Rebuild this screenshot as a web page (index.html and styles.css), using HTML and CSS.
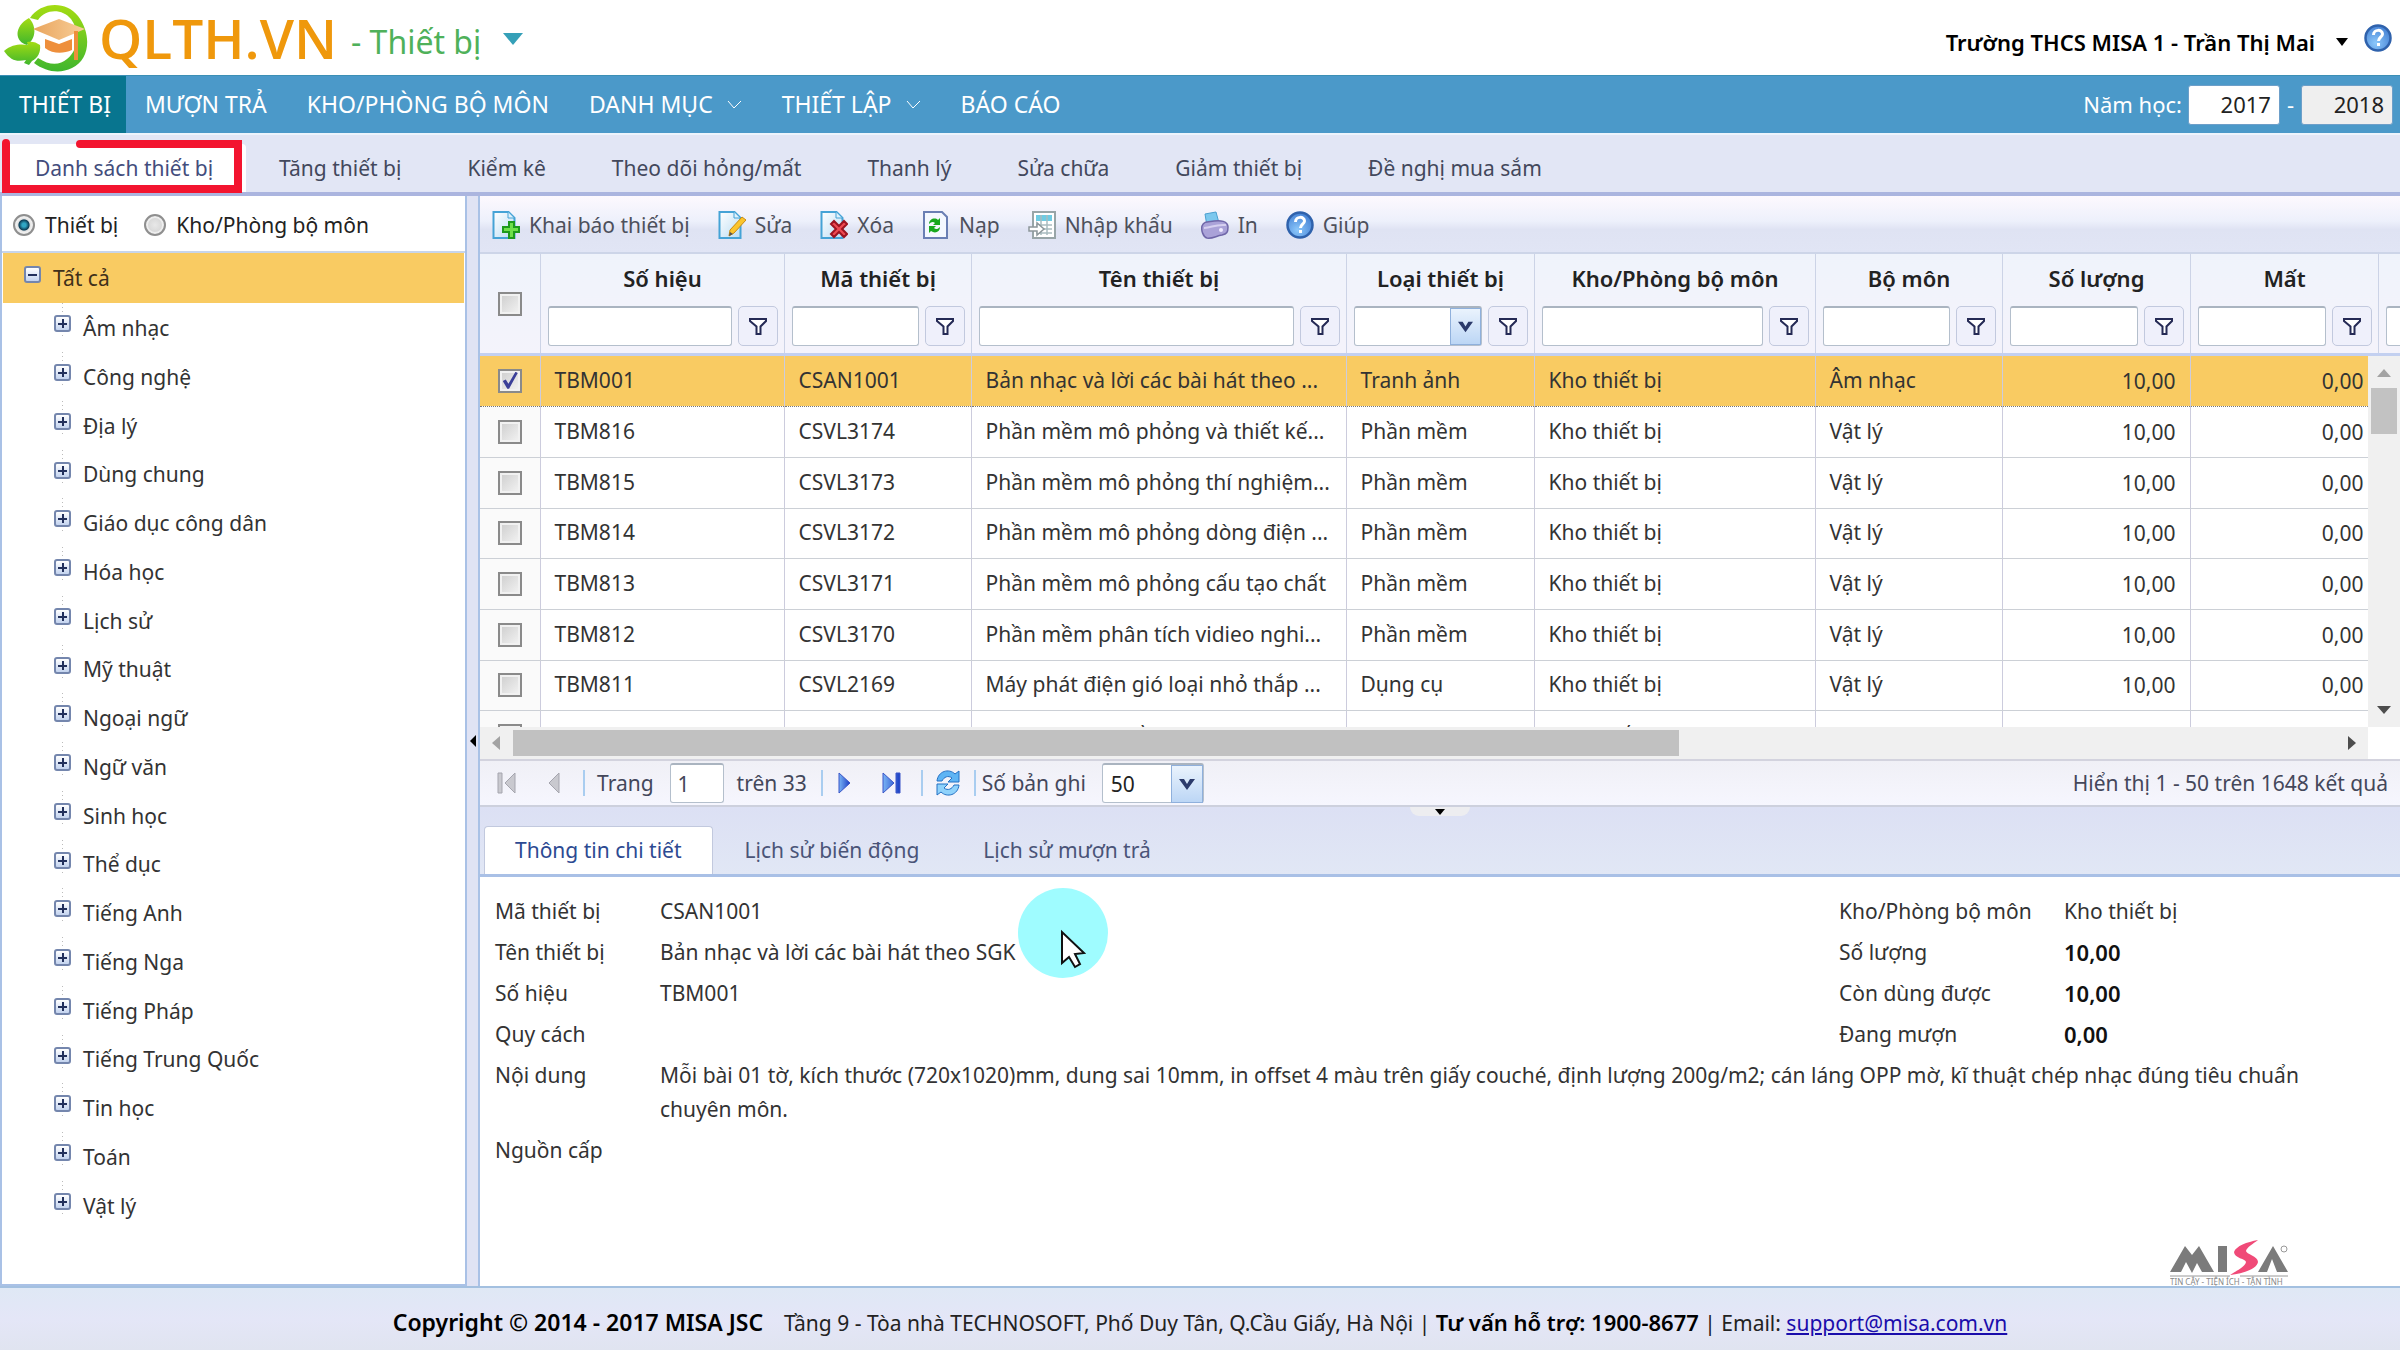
FILE: index.html
```
<!DOCTYPE html>
<html lang="vi">
<head>
<meta charset="utf-8">
<title>QLTH.VN - Thiết bị</title>
<link rel="stylesheet" href="styles.css">
</head>

<body>
<svg class="defs">
    <linearGradient id="gPage" x1="0" y1="0" x2="1" y2="1"><stop offset="0" stop-color="#fff"/><stop offset="1" stop-color="#b9dcf3"/></linearGradient>
    <linearGradient id="gLeaf" x1="0" y1="0" x2="0" y2="1"><stop offset="0" stop-color="#a4dc12"/><stop offset="1" stop-color="#3fb62d"/></linearGradient>
    <linearGradient id="gCap" x1="0" y1="0" x2="1" y2="0"><stop offset="0" stop-color="#e9a45c"/><stop offset="1" stop-color="#f8cf9a"/></linearGradient>
    <linearGradient id="gBlue" x1="0" y1="0" x2="1" y2="0"><stop offset="0" stop-color="#79b4f5"/><stop offset="1" stop-color="#1b3fc4"/></linearGradient>
    <radialGradient id="gHelp" cx="0.4" cy="0.7" r="0.8"><stop offset="0" stop-color="#8cc8fb"/><stop offset="1" stop-color="#3c78cf"/></radialGradient>
    <symbol id="filter" viewBox="0 0 20 20"><path d="M2 3h16v2l-5.500 5.500v7.500h-4v-7.500L2 5z" fill="#fff" stroke="#252a55" stroke-width="2"/></symbol>
    <symbol id="page" viewBox="0 0 28 28"><path d="M1.500 1h15l6 6v20h-21z" fill="url(#gPage)" stroke="#45a3d6" stroke-width="2"/><path d="M16 1v6h6" fill="#dff1fc" stroke="#45a3d6"/></symbol>
    <symbol id="help" viewBox="0 0 28 28"><circle cx="14" cy="14" r="12.500" fill="url(#gHelp)" stroke="#2f62ac" stroke-width="2.500"/><path d="M9.500 11c0-6 9-6 9-1 0 3-4 3.500-4 7M14.500 19v3" fill="none" stroke="#fff" stroke-width="3"/></symbol>
    <symbol id="down" viewBox="0 0 16 16"><path d="M0 3h5l3 5 3-5h5L8 14z" fill="#2b3a6b"/></symbol>
</svg>

<div class="head">
    <svg class="logo" viewBox="0 0 90 75">
        <path d="M30 18C40 2 66 0 78 16c14 18 12 44-6 52-12 6-26 4-38-5l4-5c12 8 22 7 29 1 12-10 13-28 4-40-9-11-26-10-33 1z" fill="url(#gLeaf)"/>
        <path d="M29 18c7 7 8 20-2 27-12-3-14-18 2-27z" fill="url(#gLeaf)"/>
        <path d="M4 51c8-7 17-7 24-6l-1-3c5-1 9 0 13 3 1 7-2 13-8 16l-3 4-5-2 2-3C17 62 11 61 4 51z" fill="url(#gLeaf)"/>
        <path d="M45 39l14 5 13-5v11c-9 4-19 4-27-2z" fill="#ee8f3c"/>
        <path d="M33 29l26-10 26 10-26 11z" fill="url(#gCap)"/>
        <path d="M74 31h4v29h-4z" fill="#ee8f3c"/>
    </svg>
    <h1 class="brand">QLTH.VN</h1>
    <button class="module">- Thiết bị <svg viewBox="0 0 20 12"><path d="M0 0h20L10 12z" fill="#35a0b8"/></svg></button>
    <button class="user">Trường THCS MISA 1 - Trần Thị Mai <svg viewBox="0 0 12 8"><path d="M0 0h12L6 8z"/></svg></button>
    <a class="help" href="#"><svg><use href="#help"/></svg></a>
</div>

<div class="nav">
    <a href="#" class="on">THIẾT BỊ</a>
    <a href="#">MƯỢN TRẢ</a>
    <a href="#">KHO/PHÒNG BỘ MÔN</a>
    <a href="#">DANH MỤC <svg viewBox="0 0 15 9"><path d="M1 1l6 7 7-7"/></svg></a>
    <a href="#">THIẾT LẬP <svg viewBox="0 0 15 9"><path d="M1 1l6 7 7-7"/></svg></a>
    <a href="#">BÁO CÁO</a>
    <div class="year">
        <label for="y1">Năm học:</label><input id="y1" type="text" value="2017"><span>-</span><input id="y2" type="text" value="2018" aria-label="Đến năm" readonly>
    </div>
</div>

<div class="subnav">
    <a href="#" class="on">Danh sách thiết bị</a>
    <a href="#">Tăng thiết bị</a>
    <a href="#">Kiểm kê</a>
    <a href="#">Theo dõi hỏng/mất</a>
    <a href="#">Thanh lý</a>
    <a href="#">Sửa chữa</a>
    <a href="#">Giảm thiết bị</a>
    <a href="#">Đề nghị mua sắm</a>
    <svg class="mark" viewBox="0 0 244 60"><path d="M6 8v46h232V9H80" fill="none" stroke="#f3142f" stroke-width="8" stroke-linecap="round"/></svg>
</div>

<div class="main">
    <div class="side">
        <div class="mode">
            <input type="radio" name="mode" id="m1" checked><label for="m1">Thiết bị</label>
            <input type="radio" name="mode" id="m2"><label for="m2">Kho/Phòng bộ môn</label>
        </div>
        <div class="root"><i class="tog"></i>Tất cả</div>
        <ul class="tree">
            <li><i class="tog plus"></i>Âm nhạc</li>
            <li><i class="tog plus"></i>Công nghệ</li>
            <li><i class="tog plus"></i>Địa lý</li>
            <li><i class="tog plus"></i>Dùng chung</li>
            <li><i class="tog plus"></i>Giáo dục công dân</li>
            <li><i class="tog plus"></i>Hóa học</li>
            <li><i class="tog plus"></i>Lịch sử</li>
            <li><i class="tog plus"></i>Mỹ thuật</li>
            <li><i class="tog plus"></i>Ngoại ngữ</li>
            <li><i class="tog plus"></i>Ngữ văn</li>
            <li><i class="tog plus"></i>Sinh học</li>
            <li><i class="tog plus"></i>Thể dục</li>
            <li><i class="tog plus"></i>Tiếng Anh</li>
            <li><i class="tog plus"></i>Tiếng Nga</li>
            <li><i class="tog plus"></i>Tiếng Pháp</li>
            <li><i class="tog plus"></i>Tiếng Trung Quốc</li>
            <li><i class="tog plus"></i>Tin học</li>
            <li><i class="tog plus"></i>Toán</li>
            <li><i class="tog plus"></i>Vật lý</li>
        </ul>
    </div>

    <div class="split"><svg viewBox="0 0 6 12"><path d="M6 0v12L0 6z"/></svg></div>

    <div class="content">
        <div class="tools">
            <button><svg viewBox="0 0 28 28"><use href="#page" width="28" height="28"/><path d="M17 11h5v5h5v5h-5v6h-5v-6h-6v-5h6z" fill="#6fe04a" stroke="#1e9a1c" stroke-width="2"/></svg>Khai báo thiết bị</button>
            <button><svg viewBox="0 0 28 28"><use href="#page" width="28" height="28"/><path d="M24 6l4 3-12 13-5 3 1-6z" fill="#fbc52d" stroke="#c98a12"/><path d="M11 25l1-4 3 2z" fill="#555"/></svg>Sửa</button>
            <button><svg viewBox="0 0 28 28"><use href="#page" width="28" height="28"/><path d="M11 13l3-3 5 5 5-5 3 3-5 5 5 5-3 3-5-5-5 5-3-3 5-5z" fill="#ee4a52" stroke="#9c1420" stroke-width="2"/></svg>Xóa</button>
            <button><svg viewBox="0 0 28 28"><path d="M2 1h18l5 5v21H2z" fill="#f4f8ff" stroke="#6a7fb4" stroke-width="2"/><path d="M7 13c0-5 6-7 9-4l2-2v7h-7l2-2c-2-2-4-1-6 1zM18 16c0 5-5 7-9 4l-2 2v-7h7l-2 2c2 2 4 1 6-1z" fill="#18a81e"/></svg>Nạp</button>
            <button><svg viewBox="0 0 28 28"><path d="M5 1h22v26H5z" fill="#fff" stroke="#98a5a8" stroke-width="2"/><path d="M8 4h16v6H8z" fill="#6fcbe2"/><path d="M8 14h16M8 18h16M8 22h16M13 4v20M19 4v20" stroke="#a9bcc0" stroke-width="1.500"/><path d="M1 16h8v-4l7 6-7 6v-4H1z" fill="#fff" stroke="#8d979b" stroke-width="1.500"/></svg>Nhập khẩu</button>
            <button><svg viewBox="0 0 28 28"><path d="M4 3l11-2 3 11-12 3z" fill="#7cc8ee" stroke="#4ba0d0"/><path d="M1 15c2-5 6-4 12-5s14 0 14 6c0 5-1 7-6 8-6 1-10 4-15 3-4-1-6-8-5-12z" fill="#aaa2d8" stroke="#6f66a8" stroke-width="1.500"/><path d="M3 17c8 0 10-4 22-3" stroke="#d6d0f0" stroke-width="2" fill="none"/><circle cx="20" cy="19" r="2" fill="#efeaff"/></svg>In</button>
            <button><svg><use href="#help"/></svg>Giúp</button>
        </div>

        <div class="grid">
            <div class="clip">
            <table class="thead">
                <colgroup><col class="c0"><col class="c1"><col class="c2"><col class="c3"><col class="c4"><col class="c5"><col class="c6"><col class="c7"><col class="c8"><col class="c9"></colgroup>
                <tr>
                    <th><input type="checkbox" aria-label="Chọn tất cả"></th>
                    <th><label for="f1">Số hiệu</label><div class="f"><input id="f1" type="text"><button aria-label="Lọc"><svg><use href="#filter"/></svg></button></div></th>
                    <th><label for="f2">Mã thiết bị</label><div class="f"><input id="f2" type="text"><button aria-label="Lọc"><svg><use href="#filter"/></svg></button></div></th>
                    <th><label for="f3">Tên thiết bị</label><div class="f"><input id="f3" type="text"><button aria-label="Lọc"><svg><use href="#filter"/></svg></button></div></th>
                    <th><label for="f4">Loại thiết bị</label><div class="f"><div class="combo"><select id="f4"><option></option></select><svg><use href="#down"/></svg></div><button aria-label="Lọc"><svg><use href="#filter"/></svg></button></div></th>
                    <th><label for="f5">Kho/Phòng bộ môn</label><div class="f"><input id="f5" type="text"><button aria-label="Lọc"><svg><use href="#filter"/></svg></button></div></th>
                    <th><label for="f6">Bộ môn</label><div class="f"><input id="f6" type="text"><button aria-label="Lọc"><svg><use href="#filter"/></svg></button></div></th>
                    <th><label for="f7">Số lượng</label><div class="f"><input id="f7" type="text"><button aria-label="Lọc"><svg><use href="#filter"/></svg></button></div></th>
                    <th><label for="f8">Mất</label><div class="f"><input id="f8" type="text"><button aria-label="Lọc"><svg><use href="#filter"/></svg></button></div></th>
                    <th><label></label><div class="f"><input type="text" aria-label="Hỏng"></div></th>
                </tr>
            </table>
            </div>
            <div class="body">
                <div class="rows">
                <table>
                    <colgroup><col class="c0"><col class="c1"><col class="c2"><col class="c3"><col class="c4"><col class="c5"><col class="c6"><col class="c7"><col class="c8"></colgroup>
                    <tr class="sel"><td><input type="checkbox" aria-label="TBM001" checked></td><td>TBM001</td><td>CSAN1001</td><td>Bản nhạc và lời các bài hát theo ...</td><td>Tranh ảnh</td><td>Kho thiết bị</td><td>Âm nhạc</td><td class="num">10,00</td><td class="num">0,00</td></tr>
                    <tr><td><input type="checkbox" aria-label="TBM816"></td><td>TBM816</td><td>CSVL3174</td><td>Phần mềm mô phỏng và thiết kế...</td><td>Phần mềm</td><td>Kho thiết bị</td><td>Vật lý</td><td class="num">10,00</td><td class="num">0,00</td></tr>
                    <tr><td><input type="checkbox" aria-label="TBM815"></td><td>TBM815</td><td>CSVL3173</td><td>Phần mềm mô phỏng thí nghiệm...</td><td>Phần mềm</td><td>Kho thiết bị</td><td>Vật lý</td><td class="num">10,00</td><td class="num">0,00</td></tr>
                    <tr><td><input type="checkbox" aria-label="TBM814"></td><td>TBM814</td><td>CSVL3172</td><td>Phần mềm mô phỏng dòng điện ...</td><td>Phần mềm</td><td>Kho thiết bị</td><td>Vật lý</td><td class="num">10,00</td><td class="num">0,00</td></tr>
                    <tr><td><input type="checkbox" aria-label="TBM813"></td><td>TBM813</td><td>CSVL3171</td><td>Phần mềm mô phỏng cấu tạo chất</td><td>Phần mềm</td><td>Kho thiết bị</td><td>Vật lý</td><td class="num">10,00</td><td class="num">0,00</td></tr>
                    <tr><td><input type="checkbox" aria-label="TBM812"></td><td>TBM812</td><td>CSVL3170</td><td>Phần mềm phân tích vidieo nghi...</td><td>Phần mềm</td><td>Kho thiết bị</td><td>Vật lý</td><td class="num">10,00</td><td class="num">0,00</td></tr>
                    <tr><td><input type="checkbox" aria-label="TBM811"></td><td>TBM811</td><td>CSVL2169</td><td>Máy phát điện gió loại nhỏ thắp ...</td><td>Dụng cụ</td><td>Kho thiết bị</td><td>Vật lý</td><td class="num">10,00</td><td class="num">0,00</td></tr>
                    <tr><td><input type="checkbox" aria-label="TBM810"></td><td>TBM810</td><td>CSVL2168</td><td>Bộ thí nghiệm về dòng điện ...</td><td>Dụng cụ</td><td>Kho thiết bị</td><td>Vật lý</td><td class="num">10,00</td><td class="num">0,00</td></tr>
                </table>
                </div>
                <div class="vbar">
                    <svg viewBox="0 0 14 8"><path d="M0 8L7 0l7 8z" fill="#a3a3a3"/></svg>
                    <div class="thumb"></div>
                    <svg viewBox="0 0 14 8"><path d="M0 0h14L7 8z" fill="#4d4d4d"/></svg>
                </div>
            </div>
            <div class="hbar">
                <svg viewBox="0 0 8 14"><path d="M8 0v14L0 7z" fill="#a3a3a3"/></svg>
                <div class="track"><div class="thumb"></div></div>
                <svg viewBox="0 0 8 14"><path d="M0 0v14l8-7z" fill="#4d4d4d"/></svg>
            </div>
        </div>

        <div class="pager">
            <button aria-label="Trang đầu" disabled><svg viewBox="0 0 20 22"><path d="M1 1h4v20H1zM18 1v20L8 11z" fill="#c9c9cf" stroke="#a5a5ae"/></svg></button>
            <button aria-label="Trang trước" disabled><svg viewBox="0 0 20 22"><path d="M15 1v20L5 11z" fill="#c9c9cf" stroke="#a5a5ae"/></svg></button>
            <i class="sep"></i>
            <label for="pg">Trang</label>
            <input id="pg" class="pg" type="text" value="1">
            <span class="of">trên 33</span>
            <i class="sep"></i>
            <button aria-label="Trang sau"><svg viewBox="0 0 20 22"><path d="M4 1v20l11-10z" fill="url(#gBlue)" stroke="#3a55c8"/></svg></button>
            <button aria-label="Trang cuối"><svg viewBox="0 0 20 22"><path d="M1 1v20l11-10zM14 1h4v20h-4z" fill="url(#gBlue)" stroke="#3a55c8"/></svg></button>
            <i class="sep"></i>
            <button aria-label="Tải lại"><svg class="reload" viewBox="0 0 26 26"><path d="M2 11C3 1 14-2 20 4l4-3v11H13l4-4c-4-3-8-1-10 3z" fill="#5eb4f4" stroke="#2370c4"/><path d="M24 15c-1 10-12 13-18 7l-4 3V14h11l-4 4c4 3 8 1 10-3z" fill="#8fd2fb" stroke="#2370c4"/></svg></button>
            <i class="sep last"></i>
            <label for="sz">Số bản ghi</label>
            <div class="combo size"><select id="sz"><option>50</option></select><svg><use href="#down"/></svg></div>
            <span class="total">Hiển thị 1 - 50 trên 1648 kết quả</span>
        </div>

        <div class="tabs">
            <a href="#" class="on">Thông tin chi tiết</a>
            <a href="#">Lịch sử biến động</a>
            <a href="#">Lịch sử mượn trả</a>
            <span class="grip"><svg viewBox="0 0 10 6"><path d="M0 0h10L5 6z"/></svg></span>
        </div>

        <div class="detail">
            <dl>
                <dt>Mã thiết bị</dt><dd>CSAN1001</dd><dt>Kho/Phòng bộ môn</dt><dd>Kho thiết bị</dd>
                <dt>Tên thiết bị</dt><dd>Bản nhạc và lời các bài hát theo SGK</dd><dt>Số lượng</dt><dd class="qty">10,00</dd>
                <dt>Số hiệu</dt><dd>TBM001</dd><dt>Còn dùng được</dt><dd class="qty">10,00</dd>
                <dt>Quy cách</dt><dd></dd><dt>Đang mượn</dt><dd class="qty">0,00</dd>
                <dt>Nội dung</dt><dd class="wide">Mỗi bài 01 tờ, kích thước (720x1020)mm, dung sai 10mm, in offset 4 màu trên giấy couché, định lượng 200g/m2; cán láng OPP mờ, kĩ thuật chép nhạc đúng tiêu chuẩn chuyên môn.</dd>
                <dt>Nguồn cấp</dt><dd class="wide"></dd>
            </dl>
            <svg class="misa" viewBox="0 0 118 46">
                <path d="M0 32L15 6l7 9 7-9 15 26H32l-5-9-5 10-6-11-5 10z" fill="#7b7b7b"/>
                <path d="M48 6h9v26h-9z" fill="#7b7b7b"/>
                <path d="M88 0C77 2 66 6 64 12c0 6 12 7 12 10-1 5-10 9-16 13 12-1 27-6 28-13 0-6-12-8-12-11 1-4 7-7 12-11z" fill="#f04a78"/>
                <path d="M88 32L103 6l15 26h-11l-5-13-5 13z" fill="#7b7b7b"/>
                <circle cx="114" cy="9" r="3" fill="none" stroke="#999"/>
                <path d="M0 36h60M70 36h48" stroke="#9a9a9a"/>
                <text x="0" y="45">TIN CẬY - TIỆN ÍCH - TẬN TÌNH</text>
            </svg>
            <svg class="pointer" viewBox="0 0 90 90">
                <circle cx="45" cy="45" r="45" fill="#9ffcff"/>
                <path d="M44 44v31l7-6 6 10 5-3-5-10 9-1z" fill="#fff" stroke="#111" stroke-width="2"/>
            </svg>
        </div>
    </div>
</div>

<div class="foot">
    <b>Copyright © 2014 - 2017 MISA JSC</b><span>Tầng 9 - Tòa nhà TECHNOSOFT, Phố Duy Tân, Q.Cầu Giấy, Hà Nội | <b>Tư vấn hỗ trợ: 1900-8677</b> | Email: <a href="mailto:support@misa.com.vn">support@misa.com.vn</a></span>
</div>
</body>
</html>
```
FILE: styles.css
```
*{margin:0;padding:0;box-sizing:border-box;}
body{display:flex;flex-direction:column;min-height:100vh;overflow:hidden;background:#fff;color:#333;font:21px/30px "Noto Sans","Open Sans",sans-serif;}
input,button,select{font:inherit;color:inherit;border:0;background:none;outline:0;}
a{color:inherit;text-decoration:none;}
ul{list-style:none;}
svg{display:block;flex:none;}
b,th{font-weight:600;}
.defs{position:absolute;width:0;height:0;}

/* header */
.head{display:flex;align-items:center;height:75px;}
.logo{width:90px;height:75px;}
.brand{margin-left:9px;font-family:"Open Sans",sans-serif;font-size:55px;line-height:75px;font-weight:600;color:#ef980c;}
.module{display:flex;align-items:center;margin-left:14px;padding-top:8px;font-size:32px;line-height:40px;color:#4fb15a;}
.module svg{width:20px;height:12px;margin:0 0 6px 22px;}
.user{display:flex;align-items:center;margin-left:auto;padding-top:8px;font-size:22px;font-weight:600;color:#000;}
.user svg{width:12px;height:8px;margin-left:21px;}
.help svg{width:28px;height:28px;margin:0 8px 0 16px;}

.nav{display:flex;height:58px;background:#4b99c9;border-top:1px solid #3c8fb5;color:#fff;font-size:23px;line-height:55px;}
.nav a{display:flex;align-items:center;padding:0 21px 0 19px;}
.nav .on{padding-right:15px;background:#08758f;}
.nav a svg{width:15px;height:9px;margin-left:14px;fill:none;stroke:#fff;}
.year{display:flex;align-items:center;margin-left:auto;padding-right:7px;font-size:22px;}
.year input{width:92px;height:40px;padding-right:8px;background:#fff;border:1px solid #6d9fc9;border-radius:3px;color:#222;text-align:right;}
.year label{margin-right:6px;}
.year span{margin:0 7px;}
.year input[readonly]{background:#efefef;}

.subnav{position:relative;display:flex;align-items:flex-end;height:63px;padding:0 3px;background:#e2e6f5;border-top:2px solid #edf4fc;border-bottom:4px solid #abb5df;color:#43485c;}
.subnav a{padding:0 33px;line-height:48px;}
.subnav .on{padding-left:32px;background:#fff;border-radius:4px 4px 0 0;color:#434d7c;}
.mark{position:absolute;left:0;top:0;width:244px;height:60px;}

.main{display:flex;flex:1;background:#e0e3f4;}

/* tree */
.side{width:467px;background:#fff;border:2px solid #a9c1e6;border-top:0;}
.mode{display:flex;align-items:center;height:57px;padding:3px 0 0 11px;border-bottom:2px solid #c8d5ea;color:#222;}
.mode input{appearance:none;width:22px;height:22px;margin-right:10px;border:2px solid #8f8f8f;border-radius:50%;background:radial-gradient(#e8e8e8,#ccc);box-shadow:inset 0 0 0 2px #eee;}
.mode input:checked{background:radial-gradient(#2fa6c4 15%,#0b3c55 40%,#e4e4e4 48%);}
.mode label{margin-right:26px;}
.root{display:flex;align-items:center;height:50px;margin:0 1px;padding-left:21px;background:#f9cb62;color:#40301a;}
.tree{display:grid;grid-auto-rows:49px 49px 49px 48px;padding-left:52px;}
.tree li{display:flex;align-items:center;background:repeating-linear-gradient(#bbb 0 1px,#fff 1px 4px) 8px 0/1px 36px no-repeat;}
.tog{position:relative;width:17px;height:17px;margin:0 12px 8px 0;border:2px solid #7486ad;border-radius:3px;background:linear-gradient(#fff,#c3d3ef);}
.tog:before,.plus:after{content:'';position:absolute;background:#22305c;}
.tog:before{left:2px;top:6px;width:9px;height:2px;}
.plus:after{left:6px;top:2px;width:2px;height:9px;}

.split{display:flex;align-items:center;justify-content:center;width:11px;}
.split svg{width:6px;height:12px;}
.content{flex:1;min-width:0;display:flex;flex-direction:column;border-left:2px solid #a9c1e6;}

/* toolbar */
.tools{display:flex;align-items:center;height:58px;padding:2px 0 0 12px;background:linear-gradient(#fdf9fe,#edf0fb 45%,#dfe3f3 60%,#e1e5f5);border-bottom:2px solid #cdd5e8;color:#4d505c;}
.tools button{display:flex;align-items:center;margin-right:28px;}
.tools svg{width:28px;height:28px;margin-right:9px;}

/* grid */
.grid{background:#fff;}
.clip,.rows{overflow:hidden;}
table{table-layout:fixed;width:0;border-collapse:collapse;}
.c0{width:60px;}
.c1{width:244px;}
.c2{width:187px;}
.c3{width:375px;}
.c4{width:188px;}
.c5{width:281px;}
.c6,.c9{width:187px;}
.c7,.c8{width:188px;}
.clip{background:#f0f3fc;border-bottom:3px solid #c3d0f0;}
th{height:99px;padding:7px 6px 0 7px;border-right:1px solid #ccd3e6;background:linear-gradient(#eff3fb,#f4f3fb);color:#222;font-size:22px;vertical-align:top;}
th label{display:block;height:34px;line-height:34px;}
th:first-child{padding:0;vertical-align:middle;}
.f{display:flex;gap:6px;height:40px;margin-top:11px;}
.f>input,.f>.combo{flex:1;min-width:0;}
.f>input,.combo,.pg{background:#fff;border:1px solid #b4bfcc;border-top:2px solid #aab4c0;border-radius:3px;}
.f button{display:flex;align-items:center;justify-content:center;width:40px;border:1px solid #c2c9de;border-radius:5px;background:#eff0fb;}
.f button svg{width:20px;height:20px;}
.combo{position:relative;}
.combo select{appearance:none;width:100%;height:100%;padding-left:8px;}
.combo svg{position:absolute;right:0;top:0;width:31px;height:100%;padding:8px 7px;background:linear-gradient(#eaf3fd,#bcd6f5);border:1px solid #8fb0dc;pointer-events:none;}
input[type=checkbox]{appearance:none;display:block;position:relative;width:24px;height:24px;margin:0 auto;border:2px solid #8a8a8a;background:linear-gradient(135deg,#cdcdcd,#f4f4f4);box-shadow:inset 0 0 0 2px #f1f1f1;}
input[type=checkbox]:checked:before{content:'';position:absolute;left:3px;top:1px;width:15px;height:17px;background:#3b3f98;clip-path:polygon(0 55%,20% 45%,38% 70%,85% 0,100% 8%,42% 100%,30% 100%);}
.body{display:flex;height:371px;}
.rows{flex:1;}
td{height:51px;padding:0 0 2px 14px;border-right:1px solid #ccd;border-bottom:1px solid #ccd0d6;white-space:nowrap;}
td:first-child{padding:0;background:#fafafa;}
tr:nth-child(3n+1) td{height:50px;}
.sel td,.sel td:first-child{background:#f9cb62;border-bottom:1px dotted #777;}
.num{padding:0 14px 0 0;text-align:right;}
.vbar,.hbar{display:flex;align-items:center;background:#f0f0f0;}
.vbar{flex-direction:column;width:32px;padding:13px 0;}
.vbar svg{width:14px;height:8px;}
.vbar .thumb{width:26px;height:46px;margin:11px 0 auto;background:#c2c2c2;}
.hbar{height:32px;margin-right:32px;padding:0 12px;}
.hbar svg{width:8px;height:14px;}
.track{flex:1;margin:0 13px;}
.track .thumb{width:64%;height:26px;background:#c1c1c1;}

.pager{display:flex;align-items:center;height:48px;padding:0 12px 0 17px;background:linear-gradient(#f0f0f6,#f6f6fe);border-top:2px solid #d3d3de;border-bottom:2px solid #cdd0dd;color:#44475a;}
.pager svg{width:20px;height:22px;}
.pager button{margin-right:27px;}
.pager button+.sep{margin-left:-8px;}
.pager .reload{width:26px;height:26px;margin-right:-6px;}
.sep{width:2px;height:26px;margin-right:12px;background:#a9cdf0;}
.pager .last{margin-right:6px;}
.pg{width:54px;height:40px;margin:0 13px 0 16px;padding-left:7px;}
.of{margin-right:14px;}
.pager .size{width:102px;height:40px;margin-left:16px;color:#222;}
.pager .size svg{width:32px;height:38px;}
.total{margin-left:auto;}

.tabs{position:relative;display:flex;align-items:flex-end;height:70px;padding-left:4px;background:linear-gradient(#dce0f4,#e1e7f5);border-bottom:3px solid #a9c0e6;color:#4a5478;}
.tabs a{padding:0 32px;line-height:47px;}
.tabs .on{padding:0 30px;background:#fff;border:1px solid #c2c9de;border-bottom:0;border-radius:4px 4px 0 0;color:#2d4a92;}
.grip{position:absolute;left:50%;top:0;width:60px;height:9px;margin-left:-30px;padding:2px 25px;background:#ededf0;border-radius:0 0 12px 12px;}
.grip svg{width:10px;height:6px;}

.detail{position:relative;flex:1;background:#fff;}
dl{display:grid;grid-template-columns:165px 1fr 225px 336px;row-gap:7px;padding:17px 0 0 15px;line-height:34px;}
.wide{grid-column:2/-1;padding-right:50px;}
.qty{color:#111;font-size:22px;font-weight:600;}
.misa{position:absolute;right:112px;bottom:0;width:118px;height:46px;}
.misa text{font-size:8px;fill:#888;}
.pointer{position:absolute;left:538px;top:11px;width:90px;height:90px;}

.foot{display:flex;justify-content:center;gap:21px;height:64px;border-top:2px solid #a3c0e0;background:linear-gradient(#dfe8f5,#e4e6f7 50%,#e0e4f0);color:#222;line-height:68px;}
.foot b{color:#000;font-size:23px;}
.foot span b{font-size:22px;}
.foot a{color:#1a0dab;text-decoration:underline;}
```
